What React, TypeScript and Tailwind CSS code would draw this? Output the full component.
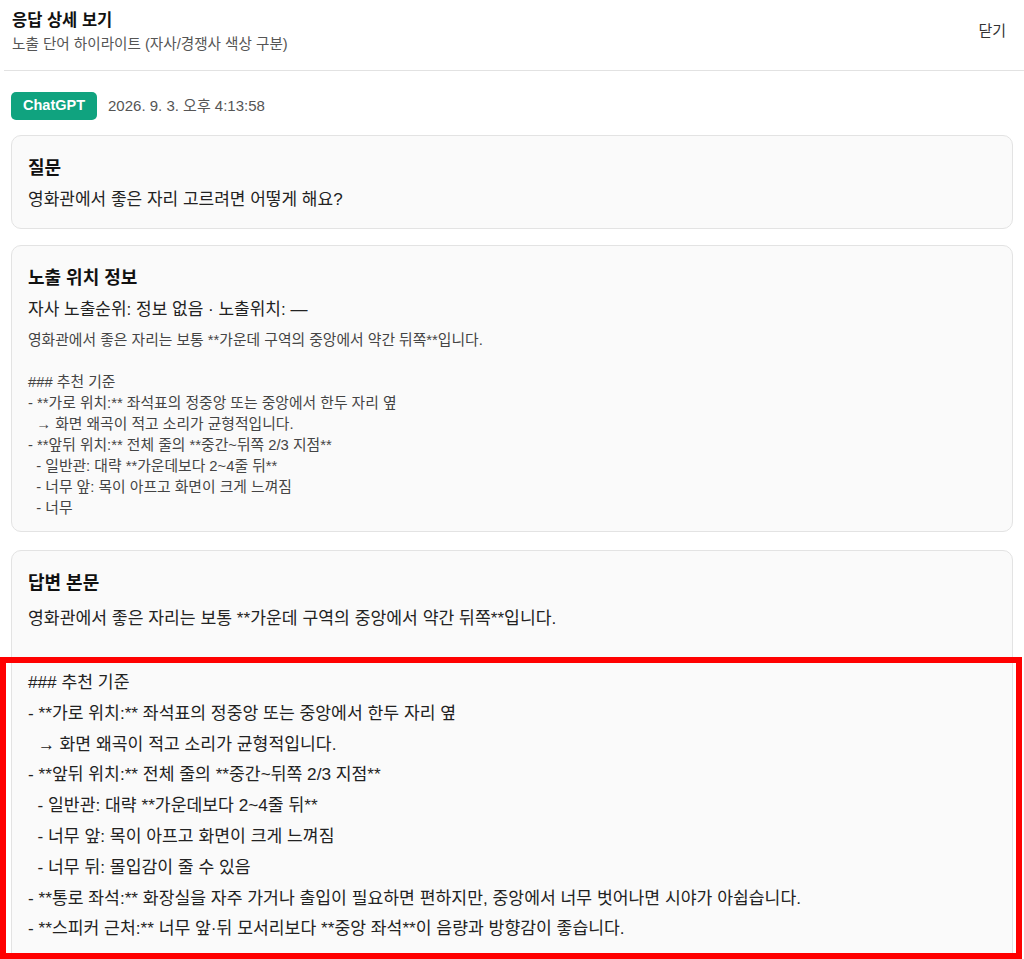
const exposureText = `영화관에서 좋은 자리는 보통 **가운데 구역의 중앙에서 약간 뒤쪽**입니다.

### 추천 기준
- **가로 위치:** 좌석표의 정중앙 또는 중앙에서 한두 자리 옆
  → 화면 왜곡이 적고 소리가 균형적입니다.
- **앞뒤 위치:** 전체 줄의 **중간~뒤쪽 2/3 지점**
  - 일반관: 대략 **가운데보다 2~4줄 뒤**
  - 너무 앞: 목이 아프고 화면이 크게 느껴짐
  - 너무`;

const answerLead = "영화관에서 좋은 자리는 보통 **가운데 구역의 중앙에서 약간 뒤쪽**입니다.";

const answerRest = `### 추천 기준
- **가로 위치:** 좌석표의 정중앙 또는 중앙에서 한두 자리 옆
  → 화면 왜곡이 적고 소리가 균형적입니다.
- **앞뒤 위치:** 전체 줄의 **중간~뒤쪽 2/3 지점**
  - 일반관: 대략 **가운데보다 2~4줄 뒤**
  - 너무 앞: 목이 아프고 화면이 크게 느껴짐
  - 너무 뒤: 몰입감이 줄 수 있음
- **통로 좌석:** 화장실을 자주 가거나 출입이 필요하면 편하지만, 중앙에서 너무 벗어나면 시야가 아쉽습니다.
- **스피커 근처:** 너무 앞·뒤 모서리보다 **중앙 좌석**이 음량과 방향감이 좋습니다.`;

const font = '"Liberation Sans", "Noto Sans CJK KR", sans-serif';

export default function App() {
  return (
    <div className="relative min-h-[959px] bg-white text-[#222]" style={{ fontFamily: font }}>
      {/* header */}
      <div className="flex items-center justify-between pl-3 pr-[18px] pt-[9px] pb-4">
        <div className="flex flex-col gap-[3px]">
          <h1 className="text-[16.5px] leading-[22px] font-bold text-[#111]">응답 상세 보기</h1>
          <p className="text-[14.6px] leading-5 text-[#555]">
            노출 단어 하이라이트 (자사/경쟁사 색상 구분)
          </p>
        </div>
        <button className="text-[15px] text-[#333]">닫기</button>
      </div>
      <div className="ml-1 h-px bg-[#e2e2e2]" />

      <div className="flex flex-col px-[11px] pt-[21px]">
        <div className="flex items-center gap-[11px]">
          <span className="flex h-7 items-center rounded-[5px] bg-[#10a37f] px-3 text-[14.5px] font-bold text-white">
            ChatGPT
          </span>
          <span className="text-[15px] text-[#555]">2026. 9. 3. 오후 4:13:58</span>
        </div>

        <div className="mt-[15px] flex flex-col gap-4">
          <div className="rounded-[10px] border border-[#e3e3e3] bg-[#fafafa] px-4 pt-5 pb-4">
            <h2 className="text-[18px] leading-6 font-bold text-[#111]">질문</h2>
            <p className="mt-2 text-[17px] leading-6 text-[#222]">
              영화관에서 좋은 자리 고르려면 어떻게 해요?
            </p>
          </div>

          <div className="rounded-[10px] border border-[#e3e3e3] bg-[#fafafa] px-4 pt-5 pb-3">
            <h2 className="text-[18px] leading-6 font-bold text-[#111]">노출 위치 정보</h2>
            <p className="mt-2 text-[17px] leading-6 text-[#222]">
              자사 노출순위: 정보 없음 · 노출위치: —
            </p>
            <pre
              className="mt-2 whitespace-pre-wrap text-[14.8px] leading-[21px] text-[#444]"
              style={{ fontFamily: font }}
            >
              {exposureText}
            </pre>
          </div>

          <div className="mt-[2px] rounded-[10px] border border-[#e3e3e3] bg-[#fafafa] px-4 pt-5 pb-5">
            <h2 className="text-[18px] leading-6 font-bold text-[#111]">답변 본문</h2>
            <p className="mt-[8px] text-[17.2px] leading-[31px] text-[#222]">{answerLead}</p>
            <pre
              className="mt-[33px] whitespace-pre-wrap text-[17.2px] leading-[30.8px] text-[#222]"
              style={{ fontFamily: font }}
            >
              {answerRest}
            </pre>
          </div>
        </div>
      </div>

      {/* highlight frame */}
      <div className="pointer-events-none absolute left-0 top-[657px] h-[302px] w-[1022px] border-[6px] border-[#ff0000]" />
    </div>
  );
}
